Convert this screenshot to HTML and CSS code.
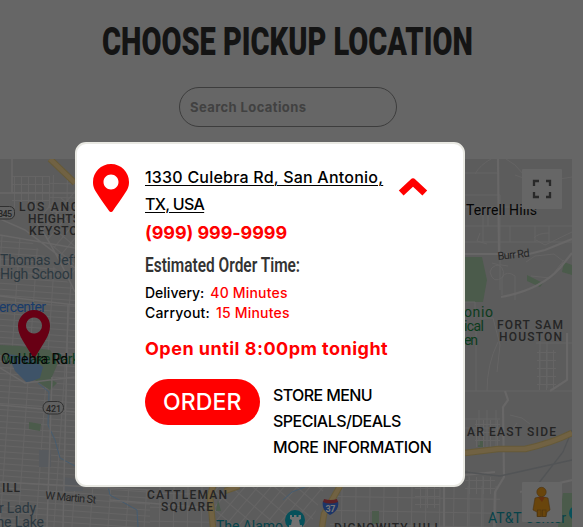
FILE: index.html
```html
<!DOCTYPE html>
<html lang="en">
<head>
<meta charset="utf-8">
<title>Choose Pickup Location</title>
<link rel="stylesheet" href="styles.css">
</head>
<body>
<main class="page">
  <h1 class="title"><span class="title-text">CHOOSE PICKUP LOCATION</span></h1>
  <div class="search"><span class="search-text">Search Locations</span></div>
  <section class="map">
    <svg class="map-art" width="572" height="368" viewBox="0 159 572 368">
      <defs>
        <pattern id="blocks" width="18" height="12" patternUnits="userSpaceOnUse" patternTransform="rotate(4)">
          <path d="M0 .5H18M.5 0V12M0 6.5H18"/>
        </pattern>
        <pattern id="square" width="14" height="14" patternUnits="userSpaceOnUse" patternTransform="rotate(1)">
          <path d="M0 .5H14M.5 0V14"/>
        </pattern>
        <pattern id="small" width="7" height="8" patternUnits="userSpaceOnUse">
          <path d="M0 .5H7M.5 0V8"/>
        </pattern>
        <pattern id="diagonal" width="10" height="14" patternUnits="userSpaceOnUse" patternTransform="rotate(40)">
          <path d="M0 .5H10M.5 0V14"/>
        </pattern>
      </defs>
      <rect class="land" y="159" width="572" height="368"/>
      <path fill="url(#small)" d="M12 176H50V208H12z"/>
      <path fill="url(#blocks)" d="M0 235L30 240 75 290V487L150 490V527H0z"/>
      <path fill="url(#diagonal)" d="M32 215L75 190V280z"/>
      <path fill="url(#square)" d="M50 175H75V215H50zM150 486H210V527H150zM330 486H500V527H330z"/>
      <path fill="url(#diagonal)" d="M215 486H325L310 527H215z"/>
      <path fill="url(#small)" d="M415 486H440V508H415zM475 420H500V447H475zM465 477H495V494H465zM537 350H556V390H537z"/>
      <path class="block" d="M39 450H51V467H39zM63 477L83 480V491H63z"/>
      <path class="green" d="M0 345L20 346 50 350 58 363 51 379 57 383 50 390 35 380 12 360 0 355zM29 422L41 424 40 431 29 429zM465 257H482L487 280 483 302H465zM527 275L543 283 540 287 527 281zM564 262L572 265V275L562 272zM563 493H572V527H558zM478 441H483V447H478zM372 511H379V524H372zM218 500L221 511 216 511z"/>
      <path class="water" d="M8 354L32 358 43 367 40 378 27 383 15 371z"/>
      <path class="stream" d="M38 383L49 392 48 425 55 440 60 458 75 466M108 486L110 495 137 510 138 527M283 500L292 492 305 487"/>
      <path class="road" d="M0 193H75M12 159V193M0 219L25 230 75 268M35 220Q50 240 75 292M0 235L75 248M0 296L75 305M0 368L25 383 75 377M0 405L75 412M52 377L47 527M68 305L63 527M0 482L150 490M110 500L210 508"/>
      <path class="thin" d="M465 173H497M475 174Q480 165 491 159M506 159L515 165 524 175M465 207H522M465 226H572M465 242H572M483 207V242M488 207V226M510 226V242M535 226V242M549 226V242M500 195V290M465 195H500M480 233L477 241 487 244M515 175Q534 185 572 177M536 240L545 245 572 232M534 238Q538 233 549 233M492 263Q506 265 503 277Q493 285 490 272Q492 262 508 266M502 295V277Q507 270 515 276V300M465 302H475V318M480 318L493 318 500 345 497 372M526 262L535 256 554 254 563 261M531 276L550 278 564 260M465 391H572M476 330V391M498 342Q487 364 487 391M540 337V384M547 342V388M536 343H572M479 410V445M465 419H500M465 428H500M487 410V447M496 410V447M510 415L522 418 530 424M517 423L510 433M469 470V527M483 476V527"/>
      <path class="road wide" d="M498 159L499 254M465 254H529L545 250 572 239M501 297Q540 290 560 268L572 253M505 391L508 400 503 407 504 477 495 492 494 527M567 333V380L550 391M444 486V527M465 475L495 472M520 492L572 480"/>
      <path class="rail" d="M465 472L500 476 572 460M535 488L563 452 572 430"/>
      <path class="highway-edge" d="M50 159L75 183M465 453L498 449 525 449Q552 443 572 433M213 486L210 496 213 527M239 486L225 491M340 486L324 514 322 527"/>
      <path class="highway" d="M50 159L75 183M465 453L498 449 525 449Q552 443 572 433M213 486L210 496 213 527M239 486L225 491M340 486L324 514 322 527"/>
      <g class="shield"><rect x="-8" y="206.500" width="22.500" height="12.500" rx="5"/><rect x="43" y="401.500" width="20.500" height="12.500" rx="6"/></g>
      <g class="label num"><text x="-2" y="216.500" textLength="14">345</text><text x="46" y="411.500" textLength="15">421</text></g>
      <g class="label district">
        <text x="19" y="211" textLength="60">LOS ANG</text><text x="28" y="223" textLength="52">HEIGHTS</text><text x="29" y="235" textLength="58">KEYSTON</text>
        <text x="2" y="492" textLength="18">ILL</text><text x="147" y="499" textLength="80">CATTLEMAN</text><text x="161" y="511" textLength="52">SQUARE</text>
        <text x="497" y="329" textLength="66">FORT SAM</text><text x="499" y="341" textLength="63">HOUSTON</text><text x="467" y="436" textLength="89">AR EAST SIDE</text>
        <text x="334" y="532" textLength="107">DIGNOWITY HILL</text>
      </g>
      <g class="label place slate"><text x="0" y="265" textLength="78">Thomas Jeff</text><text x="0" y="279" textLength="73">High School</text><text x="-1" y="513" textLength="37">r Lady</text><text x="-8" y="527" textLength="52">the Lake</text></g>
      <text class="label place blue" x="-1" y="312" textLength="47">ercenter</text>
      <g class="label place darkgreen"><text x="3" y="364" textLength="76">wn Lake Park</text><text x="464" y="317" textLength="29">onio</text><text x="464" y="331" textLength="20">ical</text><text x="464" y="345" textLength="14">en</text></g>
      <g class="label place teal"><text x="216" y="531" textLength="67">The Alamo</text><text x="488" y="523" textLength="78">AT&amp;T Center</text></g>
      <g class="label street"><text x="45" y="499" textLength="51" transform="rotate(5 45 499)">W Martin St</text><text x="498" y="260" textLength="32" transform="rotate(-6 498 260)">Burr Rd</text></g>
      <text class="city" x="466" y="215" textLength="71">Terrell Hills</text>
      <path class="map-pin" fill-rule="evenodd" d="M34 359L23 341Q18 333 18 326A16 16 0 0 1 50 326Q50 333 45 341zM34 317.500a8 8 0 1 0 .01 0z"/>
      <text class="city" x="1" y="363.500" textLength="67">Culebra Rd</text>
      <circle class="teal-dot" cx="295" cy="520" r="10"/>
      <path class="castle" d="M290 515H292V517H294V515H296.500V517H298.500V515H301V519L299 520 300 525H302V527H289V525H291L292 520 290 519z"/>
      <path class="i-blue" d="M323 501Q330 504 338 501Q340 510 330 515Q321 510 323 501z"/><path class="i-red" d="M323 502L324 499Q331 501 337 499L338 502Q330 505 323 502z"/>
      <text class="i-num" x="325.500" y="511.500" textLength="10">37</text>
      <circle class="teal-dot" cx="576" cy="513" r="7"/>
      <g class="control"><rect x="522" y="169" width="40" height="40" rx="1"/><rect x="522" y="482" width="40" height="40" rx="1"/></g>
      <path class="expand" d="M534 186V181H539M546 181H550V186M534 192V197H539M546 197H550V192"/>
      <g class="person"><path d="M535 498Q541 495 548 498L550 510 547 512 546 516V516.500H537V512L533 510z"/><rect x="537.500" y="510" width="3.500" height="6.500"/><rect x="542.500" y="510" width="3.500" height="6.500"/><circle cx="541.500" cy="492" r="4.700"/></g><path class="scarf" d="M538 497H545L542 502z"/>
    </svg>
  </section>
</main>
<section class="card">
  <svg class="pin" width="36" height="48" viewBox="0 0 384 512"><path d="M172.300 501.700C27 291 0 269.400 0 192 0 86 86 0 192 0s192 86 192 192c0 77.400-27 99-172.300 309.700-9.500 13.800-29.900 13.800-39.400 0zM192 272c44.200 0 80-35.800 80-80s-35.800-80-80-80-80 35.800-80 80 35.800 80 80 80z"/></svg>
  <div class="details">
    <a class="address"><span class="a1">1330 Culebra Rd, San Antonio,</span><br><span class="a2">TX, USA</span></a>
    <div class="phone">(999) 999-9999</div>
    <h2 class="estimate"><span class="estimate-text">Estimated Order Time:</span></h2>
    <div class="time"><span class="t1">Delivery:</span><span class="red t2">40 Minutes</span></div>
    <div class="time"><span class="t3">Carryout:</span><span class="red t4">15 Minutes</span></div>
    <div class="open">Open until 8:00pm tonight</div>
    <div class="actions">
      <a class="order"><span class="order-text">ORDER</span></a>
      <nav class="links"><a class="l1">STORE MENU</a><a class="l2">SPECIALS/DEALS</a><a class="l3">MORE INFORMATION</a></nav>
    </div>
  </div>
  <svg class="chevron" width="30" height="20" viewBox="0 0 30 20"><path d="M3.200 16L15 5 26.800 16"/></svg>
</section>
</body>
</html>
```
FILE: styles.css
```css
* { box-sizing: border-box; }
body { margin: 0; width: 583px; height: 527px; overflow: hidden; background: #666; font-family: Inter, "Liberation Sans", sans-serif; color: #000; position: relative; }
.page { display: flex; flex-direction: column; height: 527px; overflow: hidden; }
.title { margin: 14px 0 0 102px; height: 56px; font: 900 39px/56px Roboto, sans-serif; color: #141414; white-space: nowrap; }
.title-text { display: inline-block; transform-origin: 0 50%; transform: scaleX(.743); }
.search { width: 218px; height: 40px; margin: 17px 0 32px 179px; padding-left: 10px; border: 1px solid #3d3d3d; border-radius: 20px; font-size: 13px; font-weight: 700; line-height: 39px; color: #414141; letter-spacing: .4px; white-space: nowrap; }
.map { width: 572px; height: 368px; flex: none; overflow: hidden; }
.map-art { display: block; }
.map-art pattern path { fill: none; stroke: #656464; stroke-width: 1; }
.land { fill: #5c5c5c; }
.block { fill: #575a5e; }
.green { fill: #4b5b4b; }
.water { fill: #3e5368; }
.stream { fill: none; stroke: #465c70; stroke-width: 1; }
.road { fill: none; stroke: #686767; stroke-width: 1.5; }
.road.wide { stroke-width: 2.2; }
.thin { fill: none; stroke: #656464; stroke-width: 1; }
.rail { fill: none; stroke: #525456; stroke-width: 1.3; }
.highway-edge { fill: none; stroke: #665a38; stroke-width: 6.5; }
.highway { fill: none; stroke: #716243; stroke-width: 4.5; }
.label { font-family: Roboto, sans-serif; fill: #252525; }
.num { font-size: 9px; font-weight: 500; }
.shield rect { fill: #616161; stroke: #303030; }
.district { font-size: 12px; font-weight: 500; }
.place { font-size: 14px; }
.slate { fill: #2b3840; }
.blue { fill: #183b6a; }
.darkgreen { fill: #0c3b1c; }
.teal { fill: #08434a; }
.street { font-size: 11px; }
.city { font: 14px Roboto, sans-serif; fill: #060606; }
.map-pin { fill: #680014; }
.teal-dot { fill: #07505a; }
.castle { fill: #727272; }
.i-blue { fill: #1c3568; }
.i-red { fill: #5d2025; }
.i-num { font: 700 9px Roboto, sans-serif; fill: #777; }
.control rect { fill: #666; }
.expand { fill: none; stroke: #292929; stroke-width: 2.3; }
.person { fill: #69450c; stroke: #4b3210; stroke-width: .6; }
.scarf { fill: #653010; }
.card { position: absolute; left: 75px; top: 142px; width: 390px; height: 345px; border: 2px solid #e9e9e3; border-radius: 11px; background: #fff; display: flex; align-items: flex-start; white-space: nowrap; }
.pin { margin: 20px 0 0 16px; flex: none; fill: #f00; }
.details { width: 254px; margin: 20px 0 0 16px; flex: none; font-weight: 500; }
.address { display: block; height: 55px; font-size: 16px; line-height: 27px; text-decoration: underline; text-underline-offset: 2px; text-decoration-thickness: 1px; }
.a1 { letter-spacing: .22px; }
.a2 { letter-spacing: -.7px; }
.phone { height: 28px; font-size: 18px; line-height: 27px; font-weight: 700; letter-spacing: -.08px; color: #f00; }
.estimate { margin: 0; height: 36px; font: 600 20px/36px Roboto, sans-serif; color: #333; }
.estimate-text { display: inline-block; transform-origin: 0 50%; transform: scaleX(.772); }
.time { display: flex; gap: 6px; height: 20px; font-size: 14px; line-height: 20px; }
.t2 { letter-spacing: .18px; }
.t3, .t4 { letter-spacing: .2px; }
.red { color: #f00; }
.open { height: 54px; padding-top: 12px; font-size: 18px; line-height: 28px; font-weight: 700; letter-spacing: .48px; margin-bottom: 1px; color: #f00; }
.actions { display: flex; gap: 13px; width: 300px; }
.order { width: 115px; height: 46px; margin-top: 1px; border-radius: 23px; background: #f00; color: #fff; font-size: 23px; line-height: 46px; display: flex; padding-left: 18px; letter-spacing: .1px; }
.links { display: flex; flex-direction: column; margin-top: 4px; font-size: 16px; line-height: 26px; align-items: flex-start; }
.l1 { letter-spacing: -.6px; }
.l2 { letter-spacing: -.5px; }
.l3 { letter-spacing: -.3px; }
.chevron { margin: 33px 0 0 -1px; flex: none; fill: none; stroke: #f00; stroke-width: 7; stroke-linejoin: round; }
```
